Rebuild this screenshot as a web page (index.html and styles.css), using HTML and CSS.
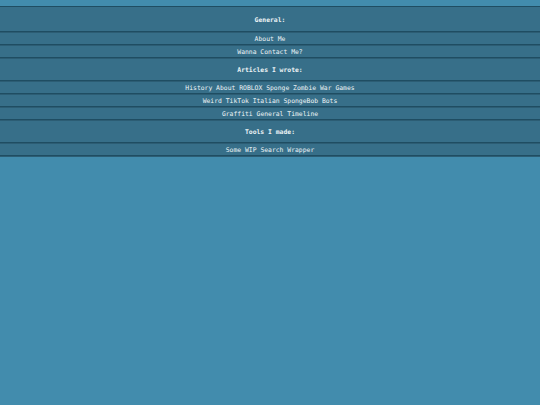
FILE: index.html
```html
<!DOCTYPE html>
<html>
<head>
<meta charset="utf-8">
<link rel="stylesheet" href="styles.css">
</head>
<body>
<nav class="menu">
  <div class="head head-first">General:</div>
  <div class="link">About Me</div>
  <div class="link">Wanna Contact Me?</div>
  <div class="head">Articles I wrote:</div>
  <div class="link">History About ROBLOX Sponge Zombie War Games</div>
  <div class="link">Weird TikTok Italian SpongeBob Bots</div>
  <div class="link">Graffiti General Timeline</div>
  <div class="head">Tools I made:</div>
  <div class="link">Some WIP Search Wrapper</div>
</nav>
</body>
</html>
```
FILE: styles.css
```css
html, body {
  margin: 0;
  padding: 0;
  background: #428cad;
  height: 100%;
}
body {
  font-family: "DejaVu Sans Mono", "Liberation Mono", monospace;
  font-size: 6.4px;
  color: #eef4f6;
}
.menu {
  margin-top: 6px;
  border-top: 1px solid #1f4d62;
  background: #376f89;
}
.head, .link {
  display: flex;
  align-items: center;
  justify-content: center;
  box-sizing: border-box;
  padding-top: 2px;
  border-bottom: 1px solid #1f4d62;
  box-shadow: 0 1px 0 #2c5d74;
}
.head {
  height: 23px;
  font-weight: bold;
}
.head-first {
  height: 25px;
}
.link {
  height: 13px;
}
```
